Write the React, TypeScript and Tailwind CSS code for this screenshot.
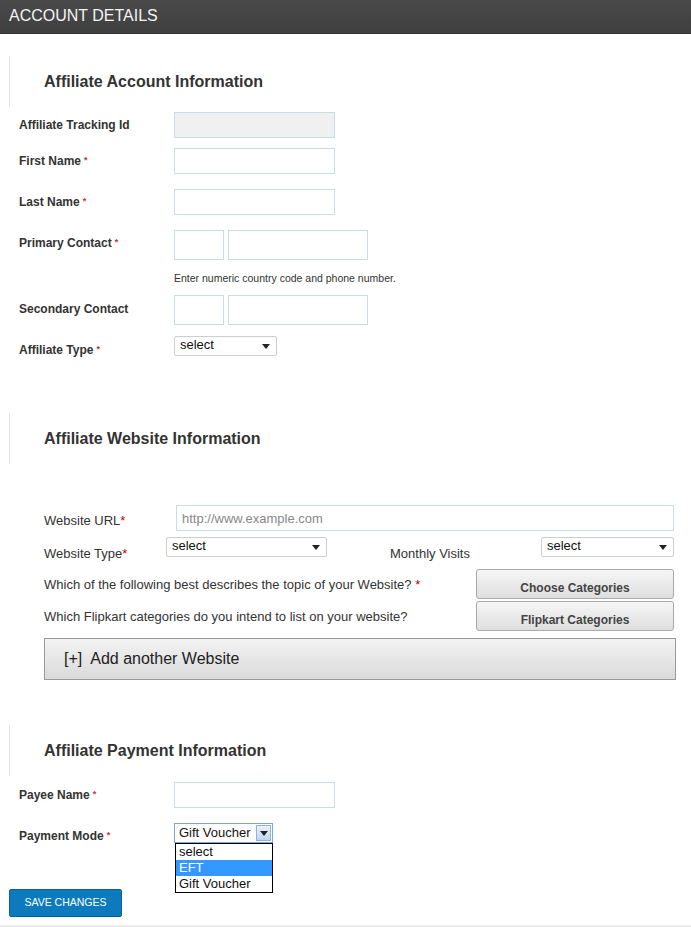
import React from "react";

const font = { fontFamily: '"Liberation Sans", Arial, sans-serif' };

const Star = () => <span className="ml-[3px] align-[2px] text-[9px] text-[#cc3333]">*</span>;

const Arrow = () => (
  <svg width="8" height="5" viewBox="0 0 8 5" className="shrink-0">
    <path d="M0 0h8L4 5z" fill="#222" />
  </svg>
);

const Select = ({ w }: { w: string }) => (
  <div className={`${w} flex h-[20px] items-center justify-between rounded-[2px] border border-[#cfcfcf] bg-white pl-[5px] pr-[6px] text-[13px] leading-[15px] text-[#111] shadow-[inset_0_1px_0_#fafafa]`}>
    <span className="-mt-[3px]">select</span>
    <Arrow />
  </div>
);

const Field = ({ w, h, bg }: { w: string; h: string; bg?: string }) => (
  <div className={`${w} ${h} border border-[#c8dee4] ${bg ?? "bg-white"}`} />
);

const Heading = ({ title, mt }: { title: string; mt: string }) => (
  <div className={`${mt} ml-[9px] flex h-[51px] items-center border-l border-[#d9e5ea] pl-[34px]`}>
    <h2 className="text-[16px] font-bold leading-[18px] text-[#333]">{title}</h2>
  </div>
);

const Row = ({ label, star, mt, pt, children }: { label: string; star?: boolean; mt: string; pt: string; children: React.ReactNode }) => (
  <div className={`${mt} flex items-start pl-[19px]`}>
    <div className={`w-[155px] ${pt} text-[12px] font-bold leading-[14px] text-[#333]`}>
      {label}
      {star && <Star />}
    </div>
    {children}
  </div>
);

const GrayButton = ({ label }: { label: string }) => (
  <div className="h-[30px] w-[198px] rounded-[3px] border border-[#a9a9a9] bg-gradient-to-b from-[#f6f6f6] to-[#dedede] pt-[11px] text-center text-[12px] font-bold leading-[14px] text-[#444]">
    {label}
  </div>
);

export default function App() {
  return (
    <div className="min-h-[927px] w-[691px] bg-white" style={font}>
      <div className="h-[34px] border-b border-[#333] bg-gradient-to-b from-[#4a4a4a] to-[#3f3f3f] pl-[9px] text-[16px] leading-[31px] text-[#f4f4f4]">
        ACCOUNT DETAILS
      </div>

      <Heading title="Affiliate Account Information" mt="mt-[22px]" />

      <Row label="Affiliate Tracking Id" mt="mt-[5px]" pt="pt-[6px]">
        <Field w="w-[161px]" h="h-[26px]" bg="bg-[#f0f0f0]" />
      </Row>
      <Row label="First Name" star mt="mt-[10px]" pt="pt-[5px]">
        <Field w="w-[161px]" h="h-[26px]" />
      </Row>
      <Row label="Last Name" star mt="mt-[15px]" pt="pt-[5px]">
        <Field w="w-[161px]" h="h-[26px]" />
      </Row>
      <Row label="Primary Contact" star mt="mt-[15px]" pt="pt-[5px]">
        <div className="flex gap-[4px]">
          <Field w="w-[50px]" h="h-[30px]" />
          <Field w="w-[140px]" h="h-[30px]" />
        </div>
      </Row>
      <div className="mt-[12px] pl-[174px] text-[10.5px] leading-[12px] text-[#333]">
        Enter numeric country code and phone number.
      </div>
      <Row label="Secondary Contact" mt="mt-[11px]" pt="pt-[7px]">
        <div className="flex gap-[4px]">
          <Field w="w-[50px]" h="h-[30px]" />
          <Field w="w-[140px]" h="h-[30px]" />
        </div>
      </Row>
      <Row label="Affiliate Type" star mt="mt-[11px]" pt="pt-[6px]">
        <Select w="w-[103px]" />
      </Row>

      <Heading title="Affiliate Website Information" mt="mt-[56px]" />

      <div className="pl-[44px] pr-[17px] text-[13px] leading-[15px] text-[#333]">
        <div className="mt-[41px] flex h-[26px] items-start">
          <div className="w-[132px] pt-[8px]">
            Website URL<span className="text-[#cc0000]">*</span>
          </div>
          <div className="flex h-[26px] flex-1 items-center border border-[#c8dee4] pl-[5px] text-[#888]">
            http://www.example.com
          </div>
        </div>
        <div className="mt-[6px] flex h-[20px] items-start">
          <div className="w-[122px] pt-[9px]">
            Website Type<span className="text-[#cc0000]">*</span>
          </div>
          <Select w="w-[161px]" />
          <div className="ml-[63px] w-[151px] pt-[9px]">Monthly Visits</div>
          <Select w="w-[133px]" />
        </div>
        <div className="mt-[12px] flex items-center justify-between">
          <div>
            Which of the following best describes the topic of your Website? <span className="text-[#cc0000]">*</span>
          </div>
          <GrayButton label="Choose Categories" />
        </div>
        <div className="mt-[2px] flex items-center justify-between">
          <div>Which Flipkart categories do you intend to list on your website?</div>
          <GrayButton label="Flipkart Categories" />
        </div>
        <div className="-mr-[2px] mt-[7px] flex h-[42px] items-center border border-[#9a9a9a] bg-gradient-to-b from-[#f3f3f3] to-[#dadada] pl-[19px] text-[16px] leading-[18px] text-[#222]">
          <span>[+]</span>
          <span className="ml-[8px]">Add another Website</span>
        </div>
      </div>

      <Heading title="Affiliate Payment Information" mt="mt-[45px]" />

      <Row label="Payee Name" star mt="mt-[6px]" pt="pt-[5px]">
        <Field w="w-[161px]" h="h-[26px]" />
      </Row>
      <Row label="Payment Mode" star mt="mt-[15px]" pt="pt-[5px]">
        <div className="relative">
          <div className="flex h-[20px] w-[99px] items-stretch border border-[#7ea6cf] bg-white">
            <span className="flex-1 pl-[4px] text-[13px] leading-[17px] text-[#111]">Gift Voucher</span>
            <span className="m-[1px] flex w-[15px] items-center justify-center border border-[#8fb3d6] bg-gradient-to-b from-[#eaf3fb] to-[#bcd6ee]">
              <Arrow />
            </span>
          </div>
          <div className="absolute left-[1px] top-[20px] z-10 w-[98px] border border-black bg-white text-[13px] leading-[16px] text-[#111]">
            <div className="pl-[3px]">select</div>
            <div className="bg-[#3399ff] pl-[3px] text-white">EFT</div>
            <div className="pl-[3px]">Gift Voucher</div>
          </div>
        </div>
      </Row>

      <div className="ml-[9px] mt-[46px] flex h-[28px] w-[113px] items-center justify-center rounded-[2px] border border-[#0a5f92] bg-[#0c7bbd] text-[10.5px] text-white">
        SAVE CHANGES
      </div>
      <div className="mt-[8px] border-t-2 border-[#ececec]" />
    </div>
  );
}
